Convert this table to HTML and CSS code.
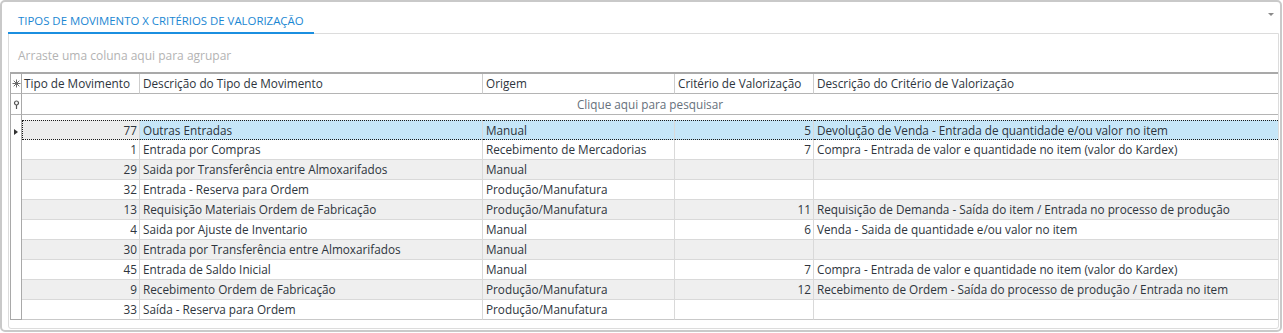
FILE: index.html
```html
<!DOCTYPE html>
<html lang="pt">
<head>
<meta charset="utf-8">
<title>Tipos de Movimento x Critérios de Valorização</title>
<link rel="stylesheet" href="styles.css">
</head>
<body>
<div class="panel">
  <div class="tabbar">
    <div class="tab">TIPOS DE MOVIMENTO X CRITÉRIOS DE VALORIZAÇÃO</div>
    <span class="menu-arrow"></span>
  </div>
  <div class="content">
    <div class="grouppanel">Arraste uma coluna aqui para agrupar</div>
    <table class="grid">
      <colgroup>
        <col class="c-ind"><col class="c-1"><col class="c-2"><col class="c-3"><col class="c-4"><col class="c-5">
      </colgroup>
      <thead>
        <tr class="hdr">
          <th class="ind"><svg class="ico" width="9" height="9" viewBox="0 0 9 9"><g stroke="#6a6a6a" stroke-width="1"><line x1="4.5" y1="0.5" x2="4.5" y2="8.5"/><line x1="0.5" y1="4.5" x2="8.5" y2="4.5"/><line x1="1.7" y1="1.7" x2="7.3" y2="7.3"/><line x1="7.3" y1="1.7" x2="1.7" y2="7.3"/></g></svg></th>
          <th class="first">Tipo de Movimento</th>
          <th>Descrição do Tipo de Movimento</th>
          <th>Origem</th>
          <th>Critério de Valorização</th>
          <th class="last">Descrição do Critério de Valorização</th>
        </tr>
        <tr class="filter">
          <td class="ind"><svg class="ico" width="7" height="9" viewBox="0 0 7 9"><circle cx="3.5" cy="3" r="2" fill="none" stroke="#555" stroke-width="1.2"/><line x1="3.5" y1="5" x2="3.5" y2="9" stroke="#555" stroke-width="1.2"/></svg></td>
          <td colspan="5" class="filter-text">Clique aqui para pesquisar</td>
        </tr>
        <tr class="spacer">
          <td class="ind"></td>
          <td colspan="5"></td>
        </tr>
      </thead>
      <tbody>
        <tr class="row alt selected">
          <td class="ind"><span class="arrow"></span></td>
          <td class="num focus">77</td><td>Outras Entradas</td><td>Manual</td><td class="num">5</td><td class="last">Devolução de Venda - Entrada de quantidade e/ou valor no item</td>
        </tr>
        <tr class="row">
          <td class="ind"></td>
          <td class="num">1</td><td>Entrada por Compras</td><td>Recebimento de Mercadorias</td><td class="num">7</td><td class="last">Compra - Entrada de valor e quantidade no item (valor do Kardex)</td>
        </tr>
        <tr class="row alt">
          <td class="ind"></td>
          <td class="num">29</td><td>Saida por Transferência entre Almoxarifados</td><td>Manual</td><td class="num"></td><td class="last"></td>
        </tr>
        <tr class="row">
          <td class="ind"></td>
          <td class="num">32</td><td>Entrada - Reserva para Ordem</td><td>Produção/Manufatura</td><td class="num"></td><td class="last"></td>
        </tr>
        <tr class="row alt">
          <td class="ind"></td>
          <td class="num">13</td><td>Requisição Materiais Ordem de Fabricação</td><td>Produção/Manufatura</td><td class="num">11</td><td class="last">Requisição de Demanda - Saída do item / Entrada no processo de produção</td>
        </tr>
        <tr class="row">
          <td class="ind"></td>
          <td class="num">4</td><td>Saida por Ajuste de Inventario</td><td>Manual</td><td class="num">6</td><td class="last">Venda - Saida de quantidade e/ou valor no item</td>
        </tr>
        <tr class="row alt">
          <td class="ind"></td>
          <td class="num">30</td><td>Entrada por Transferência entre Almoxarifados</td><td>Manual</td><td class="num"></td><td class="last"></td>
        </tr>
        <tr class="row">
          <td class="ind"></td>
          <td class="num">45</td><td>Entrada de Saldo Inicial</td><td>Manual</td><td class="num">7</td><td class="last">Compra - Entrada de valor e quantidade no item (valor do Kardex)</td>
        </tr>
        <tr class="row alt">
          <td class="ind"></td>
          <td class="num">9</td><td>Recebimento Ordem de Fabricação</td><td>Produção/Manufatura</td><td class="num">12</td><td class="last">Recebimento de Ordem - Saída do processo de produção / Entrada no item</td>
        </tr>
        <tr class="row lastrow">
          <td class="ind"></td>
          <td class="num">33</td><td>Saída - Reserva para Ordem</td><td>Produção/Manufatura</td><td class="num"></td><td class="last"></td>
        </tr>
      </tbody>
    </table>
  </div>
</div>
</body>
</html>
```

FILE: styles.css
```css
* { box-sizing: border-box; }

body {
  margin: 0;
  background: #ffffff;
  font-family: "Open Sans", "Noto Sans", sans-serif;
  font-size: 11.75px;
  color: #2e353d;
}

.panel {
  width: 1282px;
  height: 332px;
  border: 2px solid #c9c9c9;
  border-radius: 5px;
  background: #ffffff;
  display: flex;
  flex-direction: column;
}

.tabbar {
  height: 32px;
  flex: none;
  display: flex;
  align-items: flex-end;
  position: relative;
  z-index: 1;
}

.tab {
  margin-left: 6px;
  width: 306px;
  height: 32px;
  padding: 11px 0 0 10px;
  line-height: 16px;
  font-size: 11.4px;
  color: #1b87d3;
  border-bottom: 2px solid #1b8fe0;
  white-space: nowrap;
}

.menu-arrow {
  position: absolute;
  right: 6px;
  top: 11px;
  width: 0;
  height: 0;
  border-left: 3px solid transparent;
  border-right: 3px solid transparent;
  border-top: 3px solid #8a8a8a;
}

.content {
  flex: 1;
  margin: -1px 1px 1px 6px;
  border: 1px solid #dcdcdc;
  border-radius: 0 0 3px 3px;
}

.grouppanel {
  height: 38px;
  padding: 14px 0 8px 9px;
  line-height: 16px;
  font-size: 12px;
  color: #b3b3b3;
}

.grid {
  margin-left: 1px;
  width: 1268px;
  table-layout: fixed;
  border-collapse: separate;
  border-spacing: 0;
  border-left: 1px solid #a9a9a9;
  border-top: 2px solid #a9a9a9;
}

.c-ind { width: 11px; }
.c-1 { width: 118px; }
.c-2 { width: 343px; }
.c-3 { width: 192px; }
.c-4 { width: 139px; }
.c-5 { width: 464px; }

.grid th,
.grid td {
  padding: 0 3px;
  white-space: nowrap;
  overflow: hidden;
}

.grid .ind {
  padding: 0;
  text-align: center;
  border-right: 1px solid #a9a9a9;
  line-height: 0;
}

.ico { display: inline-block; vertical-align: middle; }

.hdr th {
  height: 20px;
  line-height: 19px;
  font-weight: normal;
  text-align: left;
  color: #2e353d;
  border-right: 1px solid #cdcdcd;
  border-bottom: 1px solid #b4b4b4;
}

.hdr th.first { padding-left: 2px; }
.hdr th.last { border-right: none; }
.hdr th.ind { border-right: 1px solid #a9a9a9; }

.filter td {
  height: 21px;
  line-height: 20px;
  border-bottom: 1px solid #b4b4b4;
}

.filter-text {
  text-align: center;
  color: #67717c;
}

.spacer td { height: 5px; }

.row td {
  height: 20px;
  line-height: 19px;
  border-right: 1px solid #d9d9d9;
  border-bottom: 1px solid #d9d9d9;
}

.row td.last { border-right: none; }
.row td.ind { border-right: 1px solid #a9a9a9; border-bottom: none; }
.row.lastrow td { border-bottom-color: #c9c9c9; }
.row.lastrow td.ind { border-bottom: 1px solid #a9a9a9; }

.row.alt td { background: #efefef; }
.row td.ind { background: #ffffff; }

.row td.num {
  text-align: right;
  padding-right: 2px;
}

.row.selected td {
  background: #c6e6f8;
  line-height: 18px;
  border-top: 1px dotted #1a1a1a;
  border-bottom: 1px dotted #1a1a1a;
}

.row.selected td.focus {
  background: #ececec;
  border-left: 1px dotted #1a1a1a;
}

.row.selected td.ind {
  background: #ffffff;
  border-top: none;
  border-bottom: none;
  text-align: left;
  padding-left: 3px;
}

.arrow {
  display: inline-block;
  width: 0;
  height: 0;
  border-top: 3.5px solid transparent;
  border-bottom: 3.5px solid transparent;
  border-left: 4px solid #333333;
  vertical-align: middle;
}
```
